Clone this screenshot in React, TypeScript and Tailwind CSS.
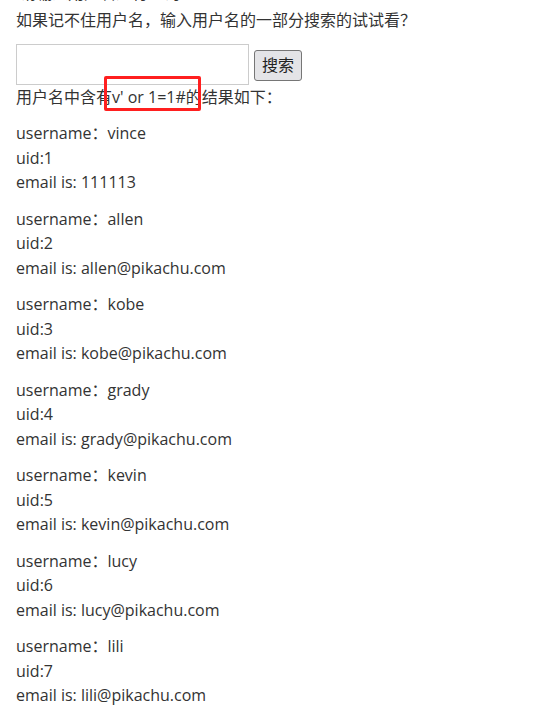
import React from "react";

const users = [
  { name: "vince", uid: 1, email: "111113" },
  { name: "allen", uid: 2, email: "allen@pikachu.com" },
  { name: "kobe", uid: 3, email: "kobe@pikachu.com" },
  { name: "grady", uid: 4, email: "grady@pikachu.com" },
  { name: "kevin", uid: 5, email: "kevin@pikachu.com" },
  { name: "lucy", uid: 6, email: "lucy@pikachu.com" },
  { name: "lili", uid: 7, email: "lili@pikachu.com" },
];

export default function App() {
  return (
    <div className="min-h-[711px] overflow-hidden bg-white px-4 font-['Open_Sans','Noto_Sans_CJK_SC',sans-serif] text-[16px] leading-[24.5px] text-[#333]">
      <p className="-mt-[19px]">·请输入用户名进行查询</p>
      <p className="mt-[2.5px]">如果记不住用户名，输入用户名的一部分搜索的试试看？</p>
      <div className="mt-[11px] flex items-center gap-[5px]">
        <input
          type="text"
          className="h-[41px] w-[233px] border border-[#cccccc] bg-white outline-none"
        />
        <button className="mt-[2px] h-[31px] rounded-[3px] border border-[#767676] bg-[#e4e4e7] px-[7px] text-[16px] leading-none text-[#222]">
          搜索
        </button>
      </div>
      <p className="relative">
        用户名中含有v' or 1=1#的结果如下：
        <span className="absolute left-[88px] -top-[9px] h-[35px] w-[97px] rounded-[2px] border-[3px] border-[#ff1f1f]" />
      </p>
      {users.map((u) => (
        <div key={u.uid} className="mt-3">
          <p>username：{u.name}</p>
          <p>uid:{u.uid}</p>
          <p>email is: {u.email}</p>
        </div>
      ))}
    </div>
  );
}
